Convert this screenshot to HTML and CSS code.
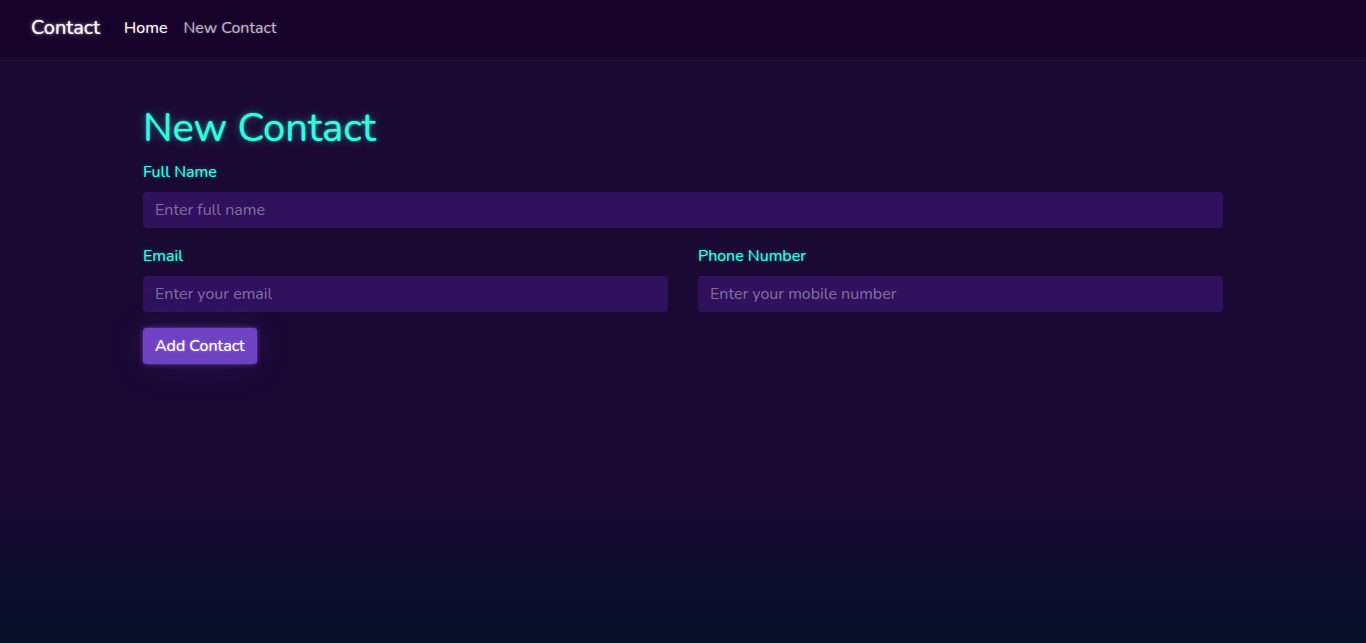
FILE: index.html
```html
<!DOCTYPE html>
<html lang="en">
<head>
<meta charset="utf-8">
<title>New Contact</title>
<link rel="stylesheet" href="styles.css">
</head>
<body>
<nav class="navbar">
  <a class="brand" href="#">Contact</a>
  <ul class="nav-links">
    <li><a class="nav-link active" href="#">Home</a></li>
    <li><a class="nav-link" href="#">New Contact</a></li>
  </ul>
</nav>
<main class="container">
  <h1 class="title">New Contact</h1>
  <form class="form">
    <div class="form-group">
      <label class="label" for="name">Full Name</label>
      <input class="input" id="name" type="text" placeholder="Enter full name">
    </div>
    <div class="row">
      <div class="form-group col">
        <label class="label" for="email">Email</label>
        <input class="input" id="email" type="email" placeholder="Enter your email">
      </div>
      <div class="form-group col">
        <label class="label" for="phone">Phone Number</label>
        <input class="input" id="phone" type="text" placeholder="Enter your mobile number">
      </div>
    </div>
    <button class="btn" type="button">Add Contact</button>
  </form>
</main>
</body>
</html>
```
FILE: styles.css
```css
* { box-sizing: border-box; }
html, body { height: 100%; }
body {
  margin: 0;
  font-family: "Nunito", Lato, "Noto Sans", sans-serif;
  font-size: 16px;
  line-height: 1.5;
  color: #fff;
  background-color: #1a0933;
  background-image: linear-gradient(to bottom, #1a0933 0%, #1a0933 75%, #061029 100%);
  min-height: 643px;
}
.navbar {
  display: flex;
  align-items: center;
  height: 57px;
  padding: 0 31px 1px;
  background: #170229;
}
.brand {
  font-size: 20px;
  color: #fff;
  text-decoration: none;
  text-shadow: 0 0 1px rgba(255,255,255,.6), 0 0 3px rgba(255,255,255,.5), 0 0 8px rgba(255,255,255,.3);
  margin-right: 16px;
  line-height: 30px;
}
.nav-links {
  display: flex;
  list-style: none;
  margin: 0;
  padding: 0;
  gap: 0;
}
.nav-link {
  display: block;
  padding: 8px 8px;
  font-size: 16px;
  color: rgba(255,255,255,.6);
  text-decoration: none;
  text-shadow: 0 0 1px rgba(255,255,255,.3), 0 0 3px rgba(255,255,255,.2);
}
.nav-link.active { color: #fff; }
.container {
  width: 1080px;
  margin: 0 auto;
  padding-top: 47px;
}
.title {
  margin: 0 0 8px;
  font-size: 40px;
  font-weight: 400;
  line-height: 1.2;
  color: #32fbe2;
  text-shadow: 0 0 1px rgba(50,251,226,.6), 0 0 3px rgba(50,251,226,.5), 0 0 10px rgba(50,251,226,.4);
}
.form-group { margin-bottom: 16px; display: flex; flex-direction: column; }
.label {
  display: block;
  margin-bottom: 8px;
  color: #32fbe2;
  font-size: 16px;
  line-height: 24px;
  text-shadow: 0 0 1px rgba(50,251,226,.5), 0 0 4px rgba(50,251,226,.35);
}
.input {
  display: block;
  width: 100%;
  height: 36px;
  padding: 6px 12px;
  font: inherit;
  color: #fff;
  background: #30115e;
  border: 0;
  border-radius: 4px;
  outline: none;
}
.input::placeholder { color: rgba(255,255,255,.4); }
.row { display: flex; gap: 30px; }
.col { flex: 1 1 0; }
.btn {
  display: inline-block;
  height: 36px;
  padding: 0 12px;
  font: inherit;
  color: #fff;
  background: #6f42c1;
  border: 0;
  border-radius: 4px;
  box-shadow: 0 0 2px rgba(111,66,193,.9), 0 0 6px rgba(111,66,193,.6), 0 0 40px rgba(111,66,193,.15);
  text-shadow: 0 0 1px rgba(255,255,255,.5), 0 0 3px rgba(255,255,255,.3);
  cursor: pointer;
}
```
